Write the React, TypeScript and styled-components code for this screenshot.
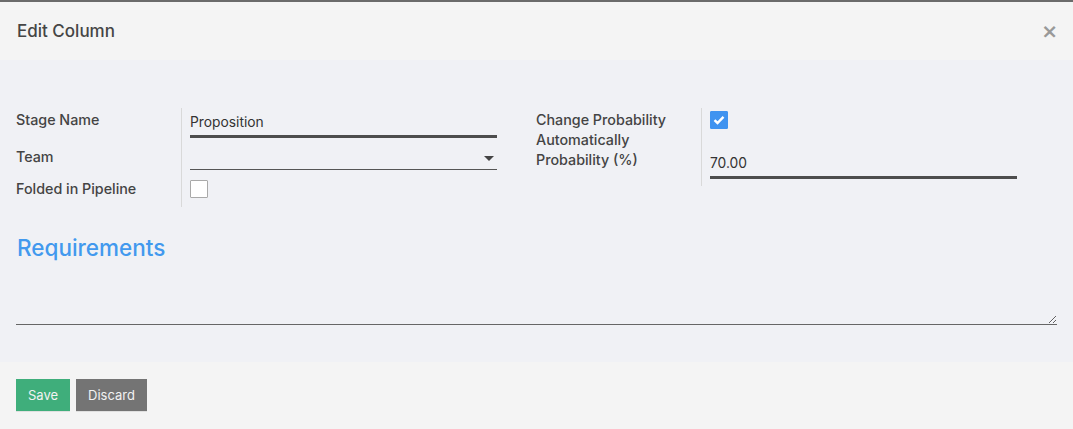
import styled, { createGlobalStyle } from 'styled-components';

const GlobalStyle = createGlobalStyle`
  html, body {
    margin: 0;
    padding: 0;
    background: #f4f4f4;
  }

  body {
    font-family: Inter, 'Open Sans', sans-serif;
    font-size: 13px;
    color: #444;
  }
`;

const Backdrop = styled.div`
  height: 2px;
  background: #6b6b6b;
`;

const StyledModal = styled.div`
  width: 1073px;
  display: flex;
  flex-direction: column;
`;

const StyledHeader = styled.header`
  height: 58px;
  background: #f4f4f4;
  display: flex;
  align-items: center;
  justify-content: space-between;
  padding: 0 17px;
`;

const StyledTitle = styled.h4`
  margin: 0;
  font-size: 17px;
  font-weight: 500;
  color: #454545;
`;

const StyledClose = styled.button`
  border: none;
  background: none;
  padding: 0;
  margin-right: -2px;
  color: #999;
  font-size: 20px;
  font-weight: 700;
  line-height: 1;
  cursor: pointer;
  font-family: 'DejaVu Sans', sans-serif;
`;

const StyledBody = styled.div`
  background: #f0f1f5;
  padding: 48px 16px 37px;
`;

const StyledGroups = styled.div`
  display: grid;
  grid-template-columns: 520px 521px;
  align-items: start;
`;

const StyledGroup = styled.div`
  display: grid;
  grid-template-columns: 165px 307px;
`;

const StyledLabel = styled.label<{ $h: number }>`
  box-sizing: border-box;
  height: ${(p) => p.$h}px;
  padding: 2px 8px 0 0;
  font-size: 14.3px;
  font-weight: 500;
  color: #444;
  line-height: 20px;
  white-space: nowrap;
`;

const StyledField = styled.div<{ $h: number; $pt?: number }>`
  height: ${(p) => p.$h}px;
  border-left: 1px solid #d9d9d9;
  padding: ${(p) => p.$pt ?? 0}px 0 0 8px;
  box-sizing: border-box;
`;

const StyledInput = styled.input`
  display: block;
  width: 307px;
  box-sizing: border-box;
  border: none;
  border-bottom: 3px solid #4d4d4d;
  background: transparent;
  font-family: inherit;
  font-size: 13.8px;
  color: #333;
  padding: 6px 0 5px;
  outline: none;
`;

const StyledSelect = styled.div`
  position: relative;
  width: 307px;
  height: 24px;
  border-bottom: 1px solid #555;
`;

const StyledCaret = styled.span`
  position: absolute;
  right: 3px;
  top: 11px;
  border-left: 5px solid transparent;
  border-right: 5px solid transparent;
  border-top: 5px solid #444;
`;

const StyledCheck = styled.span<{ $checked?: boolean }>`
  display: flex;
  align-items: center;
  justify-content: center;
  width: 18px;
  height: 18px;
  box-sizing: border-box;
  border-radius: 1px;
  background: ${(p) => (p.$checked ? '#3f93f0' : '#fff')};
  border: 1px solid ${(p) => (p.$checked ? '#3f93f0' : '#a9a9a9')};
`;

const StyledHeading = styled.h3`
  margin: 27px 0 0 1px;
  font-size: 22.5px;
  font-weight: 500;
  color: #4299ee;
  line-height: 28px;
`;

const StyledTextarea = styled.textarea`
  display: block;
  width: 100%;
  height: 56px;
  margin-top: 7px;
  box-sizing: border-box;
  border: none;
  border-bottom: 1px solid #666;
  background: transparent;
  font-family: inherit;
  font-size: 13px;
  outline: none;
  resize: vertical;
`;

const StyledFooter = styled.footer`
  background: #f4f4f4;
  height: 67px;
  display: flex;
  align-items: flex-start;
  gap: 6px;
  padding: 17px 16px 0;
  box-sizing: border-box;
`;

const StyledButton = styled.button<{ $variant: 'primary' | 'secondary' }>`
  height: 32px;
  padding: 0 12px;
  border: none;
  border-radius: 0;
  font-family: inherit;
  font-size: 13px;
  color: #f2f2f2;
  background: ${(p) => (p.$variant === 'primary' ? '#3fae7b' : '#747474')};
  box-shadow: 0 1px 0 rgba(0, 0, 0, 0.08);
  cursor: pointer;
`;

const CheckMark = () => (
  <svg width="12" height="10" viewBox="0 0 12 10">
    <path d="M1.5 5.2 L4.5 8 L10.5 1.8" fill="none" stroke="#fff" strokeWidth="2.4" />
  </svg>
);

const App = () => {
  return (
    <>
      <GlobalStyle />
      <Backdrop />
      <StyledModal>
        <StyledHeader>
          <StyledTitle>Edit Column</StyledTitle>
          <StyledClose aria-label="Close">×</StyledClose>
        </StyledHeader>
        <StyledBody>
          <StyledGroups>
            <StyledGroup>
              <StyledLabel $h={37}>Stage Name</StyledLabel>
              <StyledField $h={37}>
                <StyledInput defaultValue="Proposition" />
              </StyledField>
              <StyledLabel $h={32}>Team</StyledLabel>
              <StyledField $h={32}>
                <StyledSelect>
                  <StyledCaret />
                </StyledSelect>
              </StyledField>
              <StyledLabel $h={30}>Folded in Pipeline</StyledLabel>
              <StyledField $h={30} $pt={3}>
                <StyledCheck />
              </StyledField>
            </StyledGroup>
            <StyledGroup>
              <StyledLabel $h={40}>
                Change Probability
                <br />
                Automatically
              </StyledLabel>
              <StyledField $h={40} $pt={3}>
                <StyledCheck $checked>
                  <CheckMark />
                </StyledCheck>
              </StyledField>
              <StyledLabel $h={38}>Probability (%)</StyledLabel>
              <StyledField $h={38} $pt={1}>
                <StyledInput defaultValue="70.00" />
              </StyledField>
            </StyledGroup>
          </StyledGroups>
          <StyledHeading>Requirements</StyledHeading>
          <StyledTextarea />
        </StyledBody>
        <StyledFooter>
          <StyledButton $variant="primary">Save</StyledButton>
          <StyledButton $variant="secondary">Discard</StyledButton>
        </StyledFooter>
      </StyledModal>
    </>
  );
};

export default App;
